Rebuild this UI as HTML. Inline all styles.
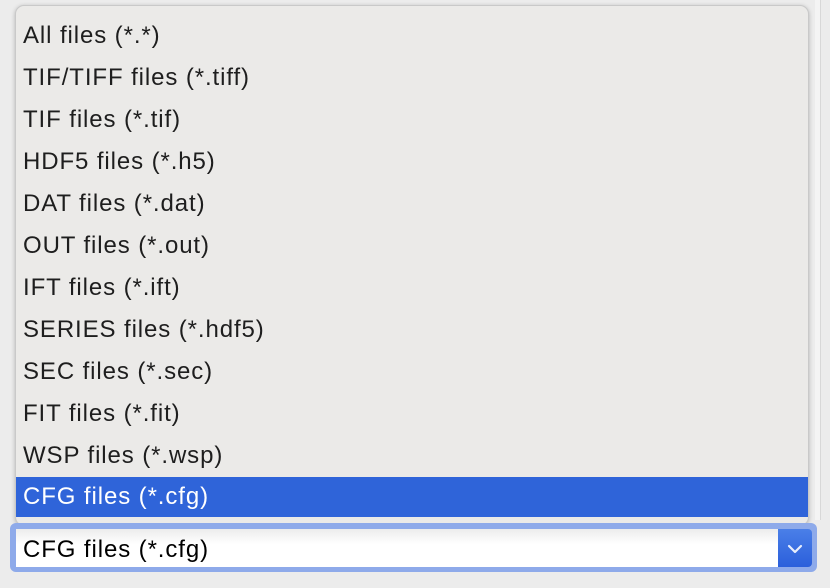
<!DOCTYPE html>
<html><head><style>
body{margin:0;width:830px;height:588px;background:#ececec;position:relative;overflow:hidden;font-family:"Liberation Sans",sans-serif;}
.strip{position:absolute;left:815px;top:0;width:5px;height:520px;background:#f4f4f4;border-right:1px solid #d8d8d8;}
.pop{position:absolute;left:15px;top:5px;width:794px;height:521px;background:#ebeae8;border:1px solid #c9c9c9;border-radius:9px;box-shadow:0 1px 4px rgba(0,0,0,.25);box-sizing:border-box;overflow:hidden;}
.row{position:absolute;left:0;width:100%;height:40px;line-height:40px;font-size:24px;letter-spacing:0.9px;color:#1e1e1e;padding-left:7px;box-sizing:border-box;}
.sel{background:#2f64d9;color:#fff;}
.ring{position:absolute;left:10px;top:523px;width:807px;height:49px;background:#8eaaea;border-radius:6px;}
.box{position:absolute;left:16px;top:529px;width:762px;height:38px;background:linear-gradient(#ececec,#fff 40%);font-size:24px;letter-spacing:0.9px;line-height:42px;color:#000;padding-left:7px;box-sizing:border-box;}
.btn{position:absolute;left:778px;top:529px;width:34px;height:38px;background:linear-gradient(#4a7fe8,#2b5fdb);border-radius:0 4px 4px 0;}
</style></head><body>
<div class="strip"></div>
<div class="pop">
<div class="row" style="top:10px">All files (*.*)</div>
<div class="row" style="top:52px">TIF/TIFF files (*.tiff)</div>
<div class="row" style="top:94px">TIF files (*.tif)</div>
<div class="row" style="top:136px">HDF5 files (*.h5)</div>
<div class="row" style="top:178px">DAT files (*.dat)</div>
<div class="row" style="top:220px">OUT files (*.out)</div>
<div class="row" style="top:262px">IFT files (*.ift)</div>
<div class="row" style="top:304px">SERIES files (*.hdf5)</div>
<div class="row" style="top:346px">SEC files (*.sec)</div>
<div class="row" style="top:388px">FIT files (*.fit)</div>
<div class="row" style="top:430px">WSP files (*.wsp)</div>
<div class="row sel" style="top:471px">CFG files (*.cfg)</div>
</div>
<div class="ring"></div>
<div class="box">CFG files (*.cfg)</div>
<div class="btn"><svg width="34" height="38" viewBox="0 0 34 38"><path d="M11 17 L17 23 L23 17" fill="none" stroke="#e8eefc" stroke-width="2.2" stroke-linecap="round" stroke-linejoin="round"/></svg></div>
</body></html>
